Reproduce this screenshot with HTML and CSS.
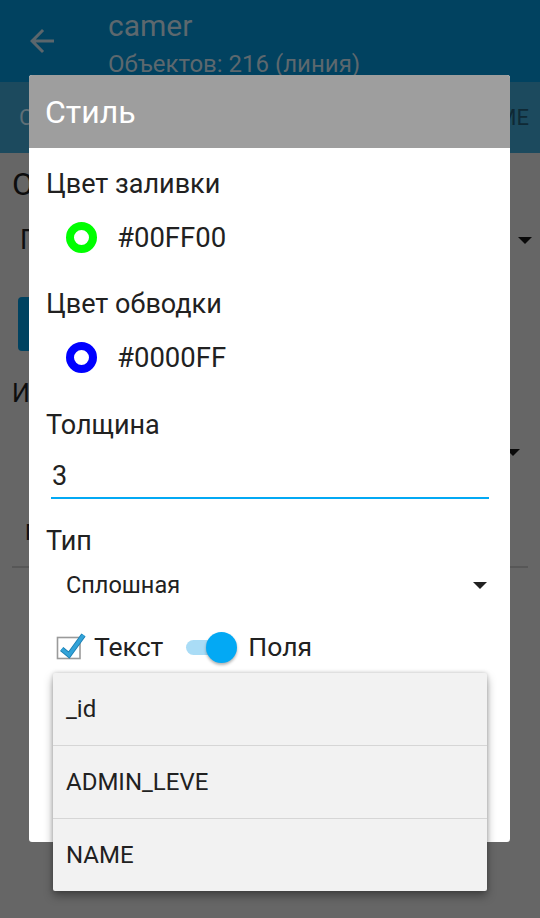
FILE: index.html
```html
<!DOCTYPE html>
<html lang="ru">
<head>
<meta charset="utf-8">
<title>Стиль</title>
<link rel="stylesheet" href="styles.css">
</head>
<body>
<div class="screen">
  <header class="appbar">
    <svg class="back" viewBox="0 0 24 24"><path d="M20 11H7.83l5.59-5.59L12 4l-8 8 8 8 1.41-1.41L7.83 13H20v-2z"/></svg>
    <div class="titles">
      <div class="t1">camer</div>
      <div class="t2">Объектов: 216 (линия)</div>
    </div>
  </header>
  <nav class="tabs">
    <span class="tab tab-sel">С</span>
    <span class="tab tab-off">ИМЕ</span>
  </nav>
  <main class="content">
    <div class="bg-head">О</div>
    <div class="bg-spin"><span>П</span><i class="tri"></i></div>
    <div class="bg-btn"></div>
    <div class="bg-head2">И</div>
    <div class="bg-spin2"><span></span><i class="tri"></i></div>
    <div class="bg-field">П</div>
    <div class="bg-line"></div>
  </main>

  <section class="dialog">
    <div class="dlg-title">Стиль</div>
    <div class="dlg-body">
      <div class="label l1">Цвет заливки</div>
      <div class="color-row r1"><span class="ring ring-green"></span><span class="hex">#00FF00</span></div>
      <div class="label l2">Цвет обводки</div>
      <div class="color-row r2"><span class="ring ring-blue"></span><span class="hex">#0000FF</span></div>
      <div class="label l3">Толщина</div>
      <div class="input">3</div>
      <div class="label l4">Тип</div>
      <div class="spinner"><span>Сплошная</span><i class="tri"></i></div>
      <div class="opts">
        <svg class="cb" viewBox="0 0 32 30" width="32" height="30">
          <rect x="2.5" y="5.5" width="22.5" height="21" fill="#fff" stroke="#9a9a9a" stroke-width="1.6"/>
          <path d="M6.7 17 L14 23 L28.5 3" fill="none" stroke="#1b7fb3" stroke-width="5.2" stroke-linejoin="miter"/>
          <path d="M6.7 17 L14 23 L28.5 3" fill="none" stroke="#33a3d8" stroke-width="3.4" stroke-linejoin="miter"/>
        </svg>
        <span class="opt-text t-text">Текст</span>
        <span class="switch"><span class="track"></span><span class="thumb"></span></span>
        <span class="opt-text t-fields">Поля</span>
      </div>
    </div>
  </section>

  <ul class="popup">
    <li>_id</li>
    <li>ADMIN_LEVE</li>
    <li>NAME</li>
  </ul>
</div>
</body>
</html>
```

FILE: styles.css
```css
* { box-sizing: border-box; margin: 0; padding: 0; }
html, body { width: 540px; height: 918px; overflow: hidden; }
body {
  font-family: Roboto, "Noto Sans", sans-serif;
  background: #666666;
  color: #212121;
}
.screen { position: relative; width: 540px; height: 918px; overflow: hidden; }

/* app bar (dimmed by dialog scrim) */
.appbar { height: 82px; background: #014260; display: flex; align-items: flex-start; }
.back { width: 36px; height: 36px; margin: 23px 0 0 24px; fill: #5b666c; flex: none; }
.titles { margin-left: 48px; color: #5d686e; }
.t1 { font-size: 30px; line-height: 40px; margin-top: 6px; }
.t2 { font-size: 24px; line-height: 30px; margin-top: 3px; }

.tabs { height: 71px; background: #1c4a5e; display: flex; align-items: center; justify-content: space-between; overflow: hidden; }
.tab { font-size: 22px; white-space: nowrap; }
.tab-sel { margin-left: 19px; color: #5f6f77; }
.tab-off { margin-right: 11px; color: #0f2935; }

/* dimmed page content behind the dialog */
.content { display: flex; flex-direction: column; color: #0d0d0d; }
.bg-head { font-size: 32px; line-height: 40px; height: 40px; margin: 11px 0 0 12px; }
.bg-spin { height: 40px; margin-top: 16px; padding: 0 8px 0 20px; display: flex; align-items: center; justify-content: space-between; font-size: 27px; }
.bg-spin .tri { border-top-color: #0a0a0a; }
.bg-btn { height: 54px; width: 470px; margin: 37px 0 0 18px; background: #004260; border-radius: 4px; }
.bg-head2 { font-size: 25px; line-height: 40px; height: 40px; margin: 23px 0 0 12px; }
.bg-spin2 { height: 40px; margin-top: 18px; padding: 0 20px 0 40px; display: flex; align-items: center; justify-content: space-between; font-size: 24px; }
.bg-spin2 .tri { border-top-color: #0a0a0a; }
.bg-field { font-size: 22px; line-height: 40px; height: 40px; margin: 41px 0 0 25px; }
.bg-line { height: 2px; margin: 13px 12px 0 12px; background: #575757; }

.tri {
  display: block; width: 0; height: 0;
  border-left: 7px solid transparent;
  border-right: 7px solid transparent;
  border-top: 7px solid #212121;
}

/* dialog */
.dialog {
  position: absolute; left: 29px; top: 75px; width: 481px; height: 767px;
  background: #fff; border-radius: 3px; overflow: hidden;
}
.dlg-title {
  height: 73px; background: #9e9e9e; color: #fff;
  font-size: 32px; padding-left: 16px; display: flex; align-items: center;
}
.dlg-body { display: flex; flex-direction: column; padding: 16px 17px 0 17px; }
.label { font-size: 27px; line-height: 40px; height: 40px; }
.l1 { margin-top: 0; }
.l2 { margin-top: 22px; }
.l3 { margin-top: 23px; }
.l4 { margin-top: 22px; }
.color-row { display: flex; align-items: center; height: 50px; margin-top: 8px; padding-left: 20px; }
.ring { width: 31px; height: 31px; border-radius: 50%; border: 8px solid; background: #fff; flex: none; }
.ring-green { border-color: #00ff00; }
.ring-blue { border-color: #0000ff; }
.hex { font-size: 27.5px; margin-left: 20px; }
.input {
  margin: 7px 4px 0 5px; height: 47px; padding: 4px 0 0 1px; line-height: 41px;
  font-size: 27px;
  border-bottom: 2px solid #03a9f4;
}
.spinner { height: 40px; margin-top: 4px; padding: 0 6px 0 20px; display: flex; align-items: center; justify-content: space-between; font-size: 23.5px; }
.opts { display: flex; align-items: center; height: 38px; margin-top: 23px; }
.cb { margin-left: 9px; flex: none; }
.opt-text { font-size: 26.5px; line-height: 38px; }
.t-text { margin-left: 7px; }
.switch { position: relative; width: 51px; height: 31px; margin-left: 23px; flex: none; }
.track { position: absolute; left: 0; top: 8px; width: 50px; height: 15px; border-radius: 8px; background: #a9dcf6; }
.thumb { position: absolute; left: 20px; top: 0; width: 31px; height: 31px; border-radius: 50%; background: #03a9f4; box-shadow: 0 2px 3px rgba(0,0,0,0.3); }
.t-fields { margin-left: 11px; }

/* dropdown popup over the dialog */
.popup {
  position: absolute; left: 53px; top: 673px; width: 434px;
  list-style: none; background: #f2f2f2;
  box-shadow: 0 5px 10px rgba(0,0,0,0.35), 0 0 4px rgba(0,0,0,0.2);
  border-radius: 2px;
}
.popup li { height: 72px; display: flex; align-items: center; padding-left: 13px; font-size: 24px; color: #212121; }
.popup li + li { height: 73px; border-top: 1px solid #d6d6d6; }
```
